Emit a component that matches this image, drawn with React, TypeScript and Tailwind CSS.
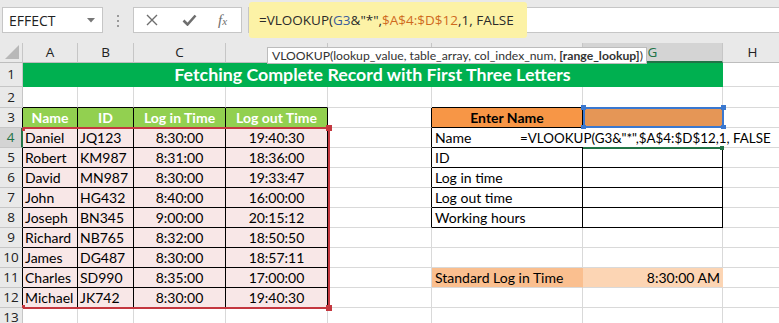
import React from "react";

const data = [
  ["Daniel", "JQ123", "8:30:00", "19:40:30"],
  ["Robert", "KM987", "8:31:00", "18:36:00"],
  ["David", "MN987", "8:30:00", "19:33:47"],
  ["John", "HG432", "8:40:00", "16:00:00"],
  ["Joseph", "BN345", "9:00:00", "20:15:12"],
  ["Richard", "NB765", "8:32:00", "18:50:50"],
  ["James", "DG487", "8:30:00", "18:57:11"],
  ["Charles", "SD990", "8:35:00", "17:00:00"],
  ["Michael", "JK742", "8:30:00", "19:40:30"],
];

const labels = ["Name", "ID", "Log in time", "Log out time", "Working hours"];
const letters = ["A", "B", "C", "D", "E", "F", "G", "H"];

type CellProps = {
  r?: string;
  b?: string;
  className?: string;
  children?: React.ReactNode;
};

function Cell({ r = "border-r-[#d9d9d9]", b = "border-b-[#d9d9d9]", className = "", children }: CellProps) {
  return (
    <div className={`flex items-center overflow-hidden whitespace-nowrap border-r border-b ${r} ${b} ${className}`}>
      {children}
    </div>
  );
}

function Toolbar() {
  return (
    <div className="flex h-[43px] items-start bg-[#e9e9e9] pt-[7px] font-['Open_Sans',sans-serif]">
      {/* name box */}
      <div className="ml-[2px] flex h-[26px] w-[101px] items-center justify-between border border-[#c6c6c6] bg-white pl-[6px] pr-[7px] text-[14px] text-[#222]">
        <span>EFFECT</span>
        <svg width="8" height="5" viewBox="0 0 8 5">
          <path d="M0 0h8L4 4.5z" fill="#777" />
        </svg>
      </div>
      <div className="ml-[14px] mt-[8px] flex flex-col gap-[3px]">
        <span className="block h-[2px] w-[2px] bg-[#9a9a9a]" />
        <span className="block h-[2px] w-[2px] bg-[#9a9a9a]" />
        <span className="block h-[2px] w-[2px] bg-[#9a9a9a]" />
      </div>
      {/* cancel / enter / fx */}
      <div className="ml-[14px] flex h-[26px] w-[109px] items-center border border-[#c6c6c6] bg-white pl-[12px]">
        <svg width="12" height="12" viewBox="0 0 12 12">
          <path d="M1 1l10 10M11 1L1 11" stroke="#6e6e6e" strokeWidth="1.4" />
        </svg>
        <svg className="ml-[24px]" width="15" height="12" viewBox="0 0 15 12">
          <path d="M1.5 6.5l4 4L13.5 1.5" stroke="#6e6e6e" strokeWidth="2.6" fill="none" />
        </svg>
        <span className="ml-[21px] font-['Liberation_Serif',serif] text-[15px] italic leading-none text-[#6e6e6e]">
          f<span className="text-[11px]">x</span>
        </span>
      </div>
      {/* formula bar */}
      <div className="ml-[6px] flex h-[26px] flex-1 items-center border-y border-l border-[#c6c6c6] bg-white text-[13.5px] text-[#2a2a2a]">
        <span className="whitespace-nowrap rounded-[3px] bg-[#fcf2a6] py-[8px] pl-[10px] pr-[13px]">
          =VLOOKUP(<span className="text-[#3a5d9c]">G3</span>&amp;"*",
          <span className="text-[#cf6a1e]">$A$4:$D$12</span>,1, FALSE
        </span>
      </div>
    </div>
  );
}

function Sheet() {
  const rowsOut: React.ReactNode[] = [];

  // column headers
  rowsOut.push(
    <div key="corner" className="flex items-end justify-end border-r border-b border-r-[#c6c6c6] border-b-[#bdbdbd] bg-[#e9e9e9] pb-[3px] pr-[3px]">
      <svg width="14" height="14" viewBox="0 0 14 14">
        <path d="M14 0v14H0z" fill="#b8b8b8" />
      </svg>
    </div>
  );
  letters.forEach((l) => {
    const sel = l === "G";
    rowsOut.push(
      <div
        key={"h" + l}
        className={
          sel
            ? "flex items-center justify-center border-r border-b-2 border-r-[#c6c6c6] border-b-[#217346] bg-[#d4d4d4] font-['Open_Sans',sans-serif] text-[13.5px] text-[#217346]"
            : "flex items-center justify-center border-r border-b border-r-[#c6c6c6] border-b-[#bdbdbd] bg-[#e9e9e9] font-['Open_Sans',sans-serif] text-[13.5px] text-[#222]"
        }
      >
        {l}
      </div>
    );
  });

  for (let rr = 1; rr <= 13; rr++) {
    // row header
    const hdrSel = rr === 4;
    rowsOut.push(
      <div
        key={"r" + rr}
        className={
          hdrSel
            ? "flex items-center justify-center border-r-2 border-b border-r-[#217346] border-b-[#c6c6c6] bg-[#d4d4d4] font-['Open_Sans',sans-serif] text-[13.5px] text-[#217346]"
            : rr >= 3 && rr <= 12
            ? "flex items-center justify-center border-r border-b border-r-black border-b-[#c6c6c6] bg-[#e9e9e9] font-['Open_Sans',sans-serif] text-[13.5px] text-[#222]"
            : "flex items-center justify-center border-r border-b border-r-[#c6c6c6] border-b-[#c6c6c6] bg-[#e9e9e9] font-['Open_Sans',sans-serif] text-[13.5px] text-[#222]"
        }
      >
        {rr}
      </div>
    );

    if (rr === 1) {
      rowsOut.push(
        <Cell key="title" r="border-r-[#00b050]" b="border-b-[#00b050]" className="col-span-7 justify-center bg-[#00b050] text-[17.8px] font-bold text-white">
          Fetching Complete Record with First Three Letters
        </Cell>
      );
      rowsOut.push(<Cell key="1H" />);
      continue;
    }

    for (let c = 1; c <= 8; c++) {
      const k = `${rr}-${c}`;
      const inT1 = rr >= 3 && rr <= 12 && c <= 4;
      const inT2 = rr >= 3 && rr <= 8 && (c === 6 || c === 7);
      let r = "border-r-[#d9d9d9]";
      let b = "border-b-[#d9d9d9]";
      if (inT1 || inT2) {
        r = "border-r-black";
        b = "border-b-black";
      }
      if (rr === 2 && (c <= 4 || c === 6 || c === 7)) b = "border-b-black";
      if (c === 5 && rr >= 3 && rr <= 8) r = "border-r-black";

      let cls = "bg-white";
      let content: React.ReactNode = null;

      if (rr === 3 && c <= 4) {
        cls = "bg-[#92d050] justify-center font-bold text-white";
        content = ["Name", "ID", "Log in Time", "Log out Time"][c - 1];
      } else if (inT1) {
        const d = data[rr - 4];
        cls = c <= 2 ? "bg-[#f8e7e7] pl-[2px]" : "bg-[#f8e7e7] justify-center";
        content = d[c - 1];
      } else if (rr === 3 && c === 6) {
        cls = "bg-[#f79646] justify-center font-bold";
        content = "Enter Name";
      } else if (rr === 3 && c === 7) {
        cls = "bg-[#e59656]";
      } else if (inT2 && c === 6) {
        cls = "bg-white pl-[3px]";
        content = labels[rr - 4];
      } else if (rr === 11 && c === 6) {
        cls = "bg-[#fabf8f] pl-[3px]";
        r = "border-r-[#fabf8f]";
        content = "Standard Log in Time";
      } else if (rr === 11 && c === 7) {
        cls = "bg-[#fcd5b4] justify-end pr-[2px]";
        r = "border-r-[#fcd5b4]";
        content = "8:30:00 AM";
      }

      rowsOut.push(
        <Cell key={k} r={r} b={b} className={cls}>
          {content}
        </Cell>
      );
    }
  }

  return (
    <div className="grid grid-cols-[23px_55px_56px_92px_102px_104px_151px_140px_60px] grid-rows-[20px_24px_21px_repeat(11,20px)]">
      {rowsOut}
    </div>
  );
}

export default function App() {
  return (
    <div className="relative h-[323px] w-[779px] overflow-hidden bg-white font-['Lato',sans-serif] text-[14px] text-black">
      <Toolbar />
      <Sheet />

      {/* function tooltip */}
      <div className="absolute left-[267px] top-[47px] h-[17px] w-[380px] whitespace-nowrap border border-[#bcbcbc] bg-white pl-[4px] font-['Lato',sans-serif] text-[12.2px] leading-[15px] text-[#333]">
        VLOOKUP(lookup_value, table_array, col_index_num, <b>[range_lookup]</b>)
      </div>

      {/* copy range A4:D12 */}
      <div className="absolute left-[23px] top-[127px] h-[182px] w-[307px] border-y-2 border-r-2 border-[#c4373f]">
        <span className="absolute -left-[1px] -top-[1px] h-[3px] w-[3px] bg-[#c4373f]" />
        <span className="absolute -bottom-[1px] -left-[1px] h-[3px] w-[3px] bg-[#c4373f]" />
        <span className="absolute -right-[4px] -top-[4px] h-[6px] w-[6px] bg-[#c4373f]" />
        <span className="absolute -bottom-[4px] -right-[4px] h-[6px] w-[6px] bg-[#c4373f]" />
      </div>

      {/* G3 reference */}
      <div className="absolute left-[583px] top-[107px] h-[21px] w-[141px] border-2 border-[#3b78cf]">
        <span className="absolute -left-[4px] -top-[4px] h-[5px] w-[5px] bg-[#3b78cf]" />
        <span className="absolute -right-[4px] -top-[4px] h-[5px] w-[5px] bg-[#3b78cf]" />
        <span className="absolute -bottom-[4px] -left-[4px] h-[5px] w-[5px] bg-[#3b78cf]" />
        <span className="absolute -bottom-[4px] -right-[4px] h-[5px] w-[5px] bg-[#3b78cf]" />
      </div>

      {/* in-cell editing */}
      <div className="absolute left-[516px] top-[129px] flex h-[18px] w-[256px] items-center whitespace-nowrap bg-white pl-[4px] text-[13.4px]">
        =VLOOKUP(G3&amp;"*",$A$4:$D$12,1, FALSE
      </div>
      <div className="absolute left-[583px] top-[147px] h-[2px] w-[140px] bg-[#217346]">
        <span className="absolute -right-[1px] -top-[1px] h-[4px] w-[4px] bg-[#217346]" />
      </div>
    </div>
  );
}
